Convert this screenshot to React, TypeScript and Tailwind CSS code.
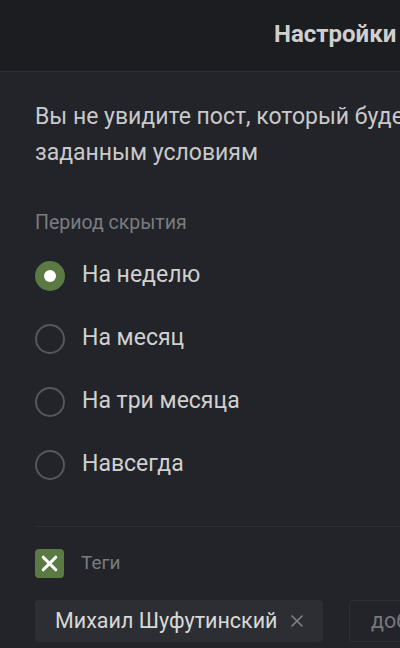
import { X } from "lucide-react"

const periods = ["На неделю", "На месяц", "На три месяца", "Навсегда"]

function Radio({ checked }: { checked: boolean }) {
  if (checked) {
    return (
      <span className="w-[30px] h-[30px] rounded-full bg-[#5b7a43] flex items-center justify-center shrink-0">
        <span className="w-[12px] h-[12px] rounded-full bg-white" />
      </span>
    )
  }
  return <span className="w-[30px] h-[30px] rounded-full border-2 border-[#55575c] shrink-0" />
}

export default function App() {
  return (
    <div className="w-[400px] h-[648px] overflow-hidden bg-[#222429] font-['Roboto',sans-serif]">
      <div className="w-[760px]">
        <header className="h-[72px] bg-[#1b1d21] border-b border-[#2c2e33] flex items-center pl-[274px] pb-[4px]">
          <h1 className="text-[24px] font-bold text-[#cfcfcf] whitespace-nowrap">Настройки скрытия</h1>
        </header>

        <main className="px-[35px] pt-[27px]">
          <p className="text-[23px] leading-[36px] text-[#c9c9c9] w-[600px]">
            Вы не увидите пост, который будет соответствовать заданным условиям
          </p>

          <div className="mt-[40px] text-[19.5px] leading-[24px] text-[#7b7c7f]">Период скрытия</div>

          <div className="mt-[9px] flex flex-col">
            {periods.map((p, i) => (
              <label key={p} className="h-[63px] flex items-center gap-[17px]">
                <Radio checked={i === 0} />
                <span className="text-[23px] text-[#d0d0d0]">{p}</span>
              </label>
            ))}
          </div>

          <div className="mt-[30px] h-px bg-[#2e3035] w-[690px]" />

          <div className="mt-[22px] flex items-center gap-[17px]">
            <span className="w-[29px] h-[29px] rounded-[4px] bg-[#5b7a43] flex items-center justify-center">
              <X className="w-[25px] h-[25px] text-white" strokeWidth={3} />
            </span>
            <span className="text-[19px] text-[#7b7c7f]">Теги</span>
          </div>

          <div className="mt-[22px] flex items-center gap-[26px]">
            <span className="h-[42px] w-[288px] rounded-[4px] bg-[#2c2e33] flex items-center pl-[20px] pr-[16px] justify-between">
              <span className="text-[21.5px] text-[#d8d8d8] whitespace-nowrap">Михаил Шуфутинский</span>
              <X className="w-[20px] h-[20px] text-[#808186]" strokeWidth={2} />
            </span>
            <span className="h-[42px] w-[220px] rounded-[4px] border border-[#2e3035] flex items-center pl-[21px]">
              <span className="text-[21.5px] text-[#77787c] whitespace-nowrap">добавить тег</span>
            </span>
          </div>
        </main>
      </div>
    </div>
  )
}
